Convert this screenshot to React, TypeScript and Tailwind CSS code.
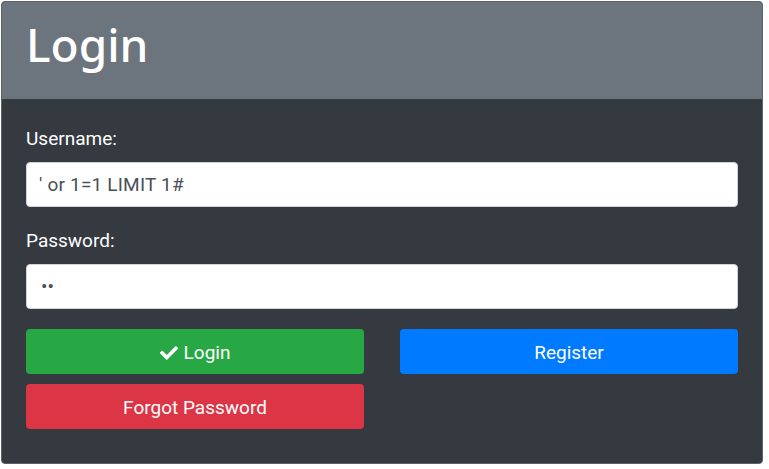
import { FaCheck } from 'react-icons/fa';

export default function App() {
    return (
        <div className="bg-white min-h-[469px] p-px" style={{ fontFamily: 'Roboto, "Liberation Sans", sans-serif' }}>
            <div className="w-[762px] h-[463px] rounded-[4px] border border-[#5c6268] overflow-hidden bg-[#343a40] flex flex-col">
                {/* Header */}
                <div className="bg-[#6c757d] px-6 pt-[15px] pb-[27px]">
                    <h1
                        className="text-[46px] leading-[55px] text-white"
                        style={{ fontFamily: '"Noto Sans", "Open Sans", sans-serif', fontWeight: 500 }}
                    >
                        Login
                    </h1>
                </div>

                {/* Body */}
                <div className="px-6 pt-[26px]">
                    <div className="mb-5">
                        <label className="block text-[19px] leading-[27px] text-white mb-[10px]">Username:</label>
                        <input
                            type="text"
                            defaultValue="' or 1=1 LIMIT 1#"
                            className="w-full h-[45px] rounded-[4px] border border-[#ced4da] bg-white px-3 text-[19px] tracking-[0.2px] text-[#495057] outline-none"
                        />
                    </div>
                    <div className="mb-5">
                        <label className="block text-[19px] leading-[27px] text-white mb-[10px]">Password:</label>
                        <input
                            type="password"
                            defaultValue="ab"
                            className="w-full h-[45px] rounded-[4px] border border-[#ced4da] bg-white pl-[14px] pr-3 text-[19px] text-[#495057] outline-none"
                        />
                    </div>

                    <div className="grid grid-cols-2 gap-x-[36px] gap-y-[10px]">
                        <button className="h-[45px] pt-1 rounded-[4px] bg-[#28a745] text-white text-[19px] flex items-center justify-center gap-[6px]">
                            <FaCheck className="w-[18px] h-[18px] -mt-px" />
                            Login
                        </button>
                        <button className="h-[45px] pt-1 rounded-[4px] bg-[#007bff] text-white text-[19px]">
                            Register
                        </button>
                        <button className="h-[45px] pt-1 rounded-[4px] bg-[#dc3545] text-white text-[19px]">
                            Forgot Password
                        </button>
                    </div>
                </div>
            </div>
        </div>
    );
}
